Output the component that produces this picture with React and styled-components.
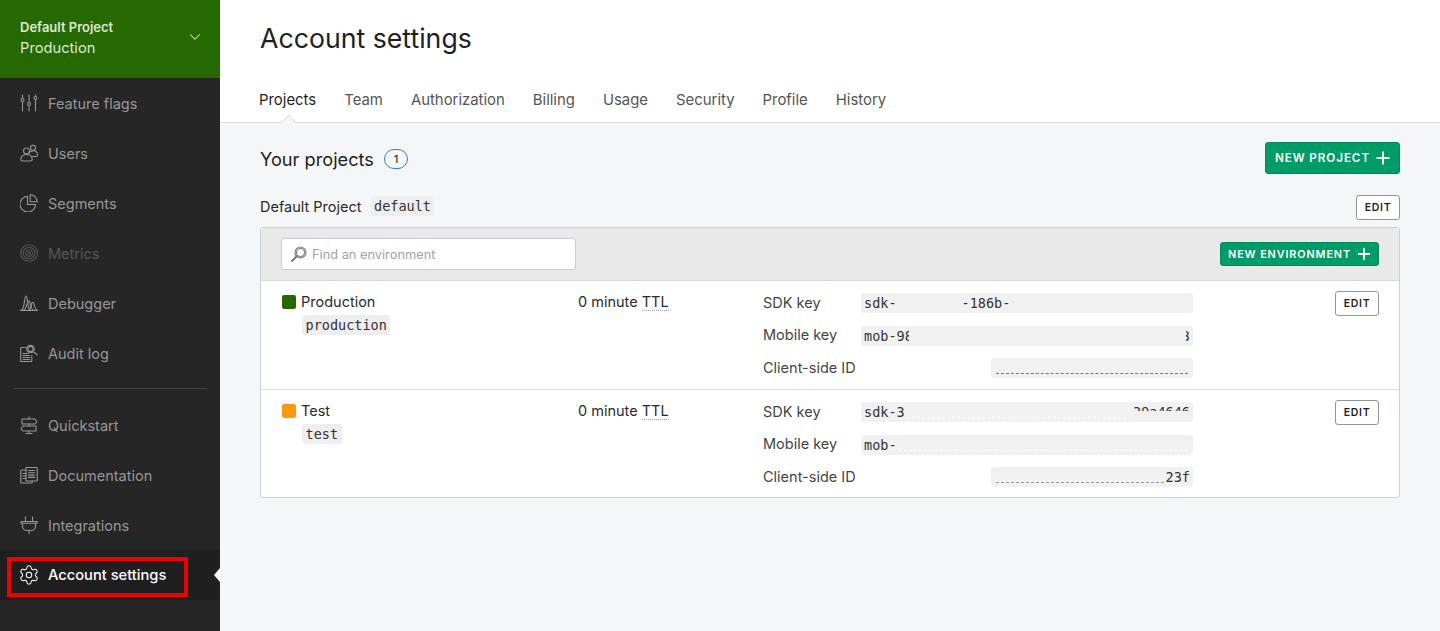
import styled, { createGlobalStyle } from 'styled-components';
import React from 'react';
import { ChevronDown, Plus, Settings } from 'lucide-react';

const MONO = '"DejaVu Sans Mono", "Liberation Mono", monospace';

const GlobalStyle = createGlobalStyle`
  html, body { margin: 0; padding: 0; height: 100%; }
  body {
    font-family: Inter, "Noto Sans", sans-serif;
    color: #2a2a2a;
    overflow: hidden;
  }
  #root { height: 100%; }
`;

const Page = styled.div`
  display: flex;
  width: 1440px;
  height: 631px;
  background: #f5f6f8;
`;

const Sidebar = styled.aside`
  flex: 0 0 220px;
  display: flex;
  flex-direction: column;
  background: #262626;
`;

const Switcher = styled.div`
  height: 78px;
  box-sizing: border-box;
  padding: 18px 16px 0 20px;
  display: flex;
  align-items: flex-start;
  justify-content: space-between;
  background: #266900;
  color: #dbe8d2;
`;

const SwitcherProject = styled.div`
  font-size: 13px;
  line-height: 18px;
  font-weight: 600;
`;

const SwitcherEnv = styled.div`
  font-size: 14.7px;
  line-height: 22px;
  margin-top: 1px;
`;

const SwitcherChevron = styled(ChevronDown)`
  margin-top: 10px;
  color: #dbe8d2;
`;

const NavItem = styled.div`
  position: relative;
  height: 50px;
  padding-left: 20px;
  display: flex;
  align-items: center;
  gap: 10px;
  font-size: ${p => (p.$active ? '14.7px' : '14.5px')};
  color: ${p => (p.$active ? '#ffffff' : p.$dim ? '#565656' : '#979797')};
  background: ${p => (p.$active ? '#1f1f1f' : 'transparent')};
  font-weight: ${p => (p.$active ? 500 : 400)};
`;

const ActiveArrow = styled.span`
  position: absolute;
  right: 0;
  top: 18px;
  border-style: solid;
  border-width: 7px 6px 7px 0;
  border-color: transparent #ffffff transparent transparent;
`;

const Highlight = styled.span`
  position: absolute;
  left: 7px;
  top: 7px;
  width: 181px;
  height: 40px;
  box-sizing: border-box;
  border: 4px solid #f00000;
`;

const NavRule = styled.hr`
  margin: 10px 13px 11px;
  border: 0;
  height: 1px;
  background: #3d3d3d;
`;

const Glyph = styled.svg`
  flex: 0 0 18px;
  width: 18px;
  height: 18px;
  fill: none;
  stroke: currentColor;
  stroke-width: 1.1;
  stroke-linecap: round;
  stroke-linejoin: round;
`;

const SlidersIcon = () => (
  <Glyph viewBox="0 0 18 18">
    <path d="M2.5 1v3.5M2.5 7.5V17M9 1v7.5M9 11.5V17M15.5 1v1.5M15.5 5.5V17" />
    <circle cx="2.5" cy="6" r="1.5" />
    <circle cx="9" cy="10" r="1.5" />
    <circle cx="15.5" cy="4" r="1.5" />
  </Glyph>
);

const UsersIcon = () => (
  <Glyph viewBox="0 0 18 18">
    <circle cx="6.5" cy="7" r="3" />
    <circle cx="13" cy="3.8" r="2.6" />
    <path d="M.8 15.5c0-3 2.300-5 5.700-5s5.700 2 5.700 5c0 .9-.6 1.500-1.500 1.500H2.300c-.9 0-1.500-.6-1.500-1.500z" />
    <path d="M9.500 8.500c.9-1 2.200-1.700 3.700-1.700 2.600 0 4.300 1.700 4.300 4.200 0 .9-.6 1.500-1.300 1.500h-3.500" />
  </Glyph>
);

const SegmentsIcon = () => (
  <Glyph viewBox="0 0 18 18">
    <path d="M7.500 2.400a7.800 7.800 0 1 0 8.100 8.100H7.500z" />
    <path d="M10.200 .8a7 7 0 0 1 7 7h-7z" />
  </Glyph>
);

const MetricsIcon = () => (
  <Glyph viewBox="0 0 18 18">
    <circle cx="9" cy="9" r="8.3" />
    <circle cx="9" cy="9" r="5.8" />
    <circle cx="9" cy="9" r="3.3" />
    <circle cx="9" cy="9" r="1.2" />
  </Glyph>
);

const DebuggerIcon = () => (
  <Glyph viewBox="0 0 18 18">
    <path d="M.8 16c2.500 0 2.700-2.500 3.300-6C4.700 6 5 2 6 2s1.300 4 1.900 8c.6 3.500 1 6 2.600 6" />
    <path d="M3.500 16c2 0 2.600-2.500 3.300-5 .6-2.200 1-4 1.900-4s1.400 1.800 1.900 4c.6 2.500 1.300 5 3 5" />
    <path d="M8.500 16c2 0 2.300-2.500 3-5.500.4-1.500.7-2.500 1.300-2.500s1 1 1.400 2.500c.7 3 1.300 5.500 3 5.500" />
    <path d="M.8 16.500h16.400" />
  </Glyph>
);

const AuditIcon = () => (
  <Glyph viewBox="0 0 18 18">
    <path d="M6 3.500H1.500a.8.8 0 0 0-.8.8v12.500c0 .4.400.8.800.8h9.500a.8.8 0 0 0 .8-.8v-5.300" />
    <circle cx="10.500" cy="5" r="3.800" />
    <circle cx="10.500" cy="5" r="2.600" />
    <path d="M13.300 7.800l4 3" />
    <path d="M3 9.500h5M3 11.500h6.500M3 13.500h6.500M3 15.500h6.500" />
  </Glyph>
);

const QuickstartIcon = () => (
  <Glyph viewBox="0 0 18 18">
    <path d="M9 1v2M9 8v2M9 15v2.500M6 17.500h6" />
    <path d="M2 3h13l2 2.500L15 8H2z" />
    <path d="M16 10H3l-2 2.500L3 15h13z" />
  </Glyph>
);

const DocsIcon = () => (
  <Glyph viewBox="0 0 18 18">
    <path d="M6 4H1.500a.7.7 0 0 0-.7.7v11.600c0 .4.300.7.700.7h10a.7.7 0 0 0 .7-.7V15" />
    <path d="M6 1.500h10.500c.4 0 .7.300.7.700v12.100c0 .4-.3.700-.7.700H6z" />
    <path d="M8.500 4.500h6M8.500 6.800h6M8.500 9.100h6M8.500 11.400h6M3 7.500h3M3 10h3M3 12.500h3" />
  </Glyph>
);

const PlugIcon = () => (
  <Glyph viewBox="0 0 18 18">
    <path d="M5.500 .8v4.700M12.500 .8v4.700" />
    <path d="M1 5.500h16v1.800H1z" />
    <path d="M2.500 7.300v3c0 2.600 2.200 4.200 4.500 4.200h4c2.300 0 4.500-1.600 4.500-4.200v-3" />
    <path d="M9 14.500v3" />
  </Glyph>
);

const GearIcon = styled(Settings)`
  flex: 0 0 22px;
  margin: 0 -2px;
`;

const NAV_TOP = [
  { label: 'Feature flags', icon: <SlidersIcon /> },
  { label: 'Users', icon: <UsersIcon /> },
  { label: 'Segments', icon: <SegmentsIcon /> },
  { label: 'Metrics', icon: <MetricsIcon />, dim: true },
  { label: 'Debugger', icon: <DebuggerIcon /> },
  { label: 'Audit log', icon: <AuditIcon /> },
];

const NAV_BOTTOM = [
  { label: 'Quickstart', icon: <QuickstartIcon /> },
  { label: 'Documentation', icon: <DocsIcon /> },
  { label: 'Integrations', icon: <PlugIcon /> },
];

const Main = styled.main`
  flex: 1;
  min-width: 0;
`;

const Header = styled.header`
  height: 123px;
  box-sizing: border-box;
  padding: 20px 40px 0;
  background: #ffffff;
  border-bottom: 1px solid #dcdde0;
`;

const Title = styled.h1`
  margin: 0;
  font-size: 26.7px;
  line-height: 36px;
  font-weight: 400;
  color: #1f1f1f;
`;

const Tabs = styled.nav`
  display: flex;
  gap: 28px;
  margin: 33px 0 0 -1px;
`;

const Tab = styled.span`
  position: relative;
  font-size: 14.9px;
  line-height: 22px;
  color: ${p => (p.$active ? '#1f1f1f' : '#555555')};

  ${p => p.$active && `
    &::after {
      content: '';
      position: absolute;
      left: 50%;
      bottom: -17px;
      width: 10px;
      height: 10px;
      margin-left: -5px;
      background: #f5f6f8;
      border-left: 1px solid #dcdde0;
      border-top: 1px solid #dcdde0;
      transform: rotate(45deg);
    }
  `}
`;

const Content = styled.div`
  padding: 19px 40px 0;
`;

const SectionHead = styled.div`
  display: flex;
  align-items: center;
  justify-content: space-between;
  height: 32px;
`;

const SectionTitle = styled.h2`
  display: flex;
  align-items: center;
  gap: 10px;
  margin: 1px 0 0;
  font-size: 18.2px;
  font-weight: 400;
  color: #1f1f1f;
`;

const CountBadge = styled.span`
  display: inline-flex;
  align-items: center;
  justify-content: center;
  width: 24px;
  height: 20px;
  box-sizing: border-box;
  border: 1px solid #2f7fe6;
  border-radius: 10px;
  font-size: 11px;
  font-weight: 500;
  color: #333333;
`;

const PrimaryButton = styled.button`
  display: inline-flex;
  align-items: center;
  gap: ${p => (p.$small ? '4px' : '3px')};
  box-sizing: border-box;
  height: ${p => (p.$small ? '24px' : '32px')};
  padding: ${p => (p.$small ? '0 5px 0 7px' : '0 6px 0 9px')};
  border: 1px solid #008a5b;
  border-radius: 3px;
  background: #009c68;
  color: #ffffff;
  font-family: inherit;
  font-size: ${p => (p.$small ? '10.8px' : '11.7px')};
  font-weight: 600;
  letter-spacing: 0.9px;
`;

const EditButton = styled.button`
  width: 44px;
  height: 25px;
  box-sizing: border-box;
  padding: 0;
  border: 1px solid #8f959e;
  border-radius: 3px;
  background: #ffffff;
  color: #1f1f1f;
  font-family: inherit;
  font-size: 10.5px;
  font-weight: 600;
  letter-spacing: 0.7px;
`;

const ProjectHead = styled.div`
  display: flex;
  align-items: flex-start;
  justify-content: space-between;
  margin-top: 21px;
  height: 25px;
`;

const ProjectName = styled.div`
  display: flex;
  align-items: center;
  gap: 9px;
  margin-top: 1px;
  font-size: 14.5px;
  color: #2a2a2a;
`;

const Code = styled.code`
  display: inline-block;
  padding: 0 3.5px;
  height: 20px;
  line-height: 20px;
  border-radius: 3px;
  background: #eeeeee;
  font-family: ${MONO};
  font-size: 13.5px;
  color: #333333;
`;

const Card = styled.section`
  margin-top: 7px;
  border: 1px solid #ccd1d9;
  border-radius: 3px;
  background: #ffffff;
`;

const Toolbar = styled.div`
  display: flex;
  align-items: center;
  justify-content: space-between;
  height: 52px;
  padding: 0 20px;
  background: #e9e9e9;
  border-bottom: 1px solid #d5d8dc;
`;

const SearchBox = styled.div`
  display: flex;
  align-items: center;
  gap: 5px;
  width: 295px;
  height: 32px;
  box-sizing: border-box;
  padding: 0 8px;
  border: 1px solid #c9ccd1;
  border-radius: 3px;
  background: #ffffff;
  font-size: 12.8px;
  color: #a3a3a3;
`;

const SearchGlyph = styled(Glyph)`
  flex: 0 0 17px;
  width: 17px;
  height: 17px;
  color: #777777;
`;

const EnvRow = styled.div`
  display: grid;
  grid-template-columns: 296px 185px 431px 1fr;
  height: 108px;
  box-sizing: border-box;
  padding: 10px 20px 0 21px;
  border-top: ${p => (p.$first ? '0' : '1px solid #dcdfe4')};
`;

const EnvName = styled.div`
  display: flex;
  align-items: center;
  gap: 5px;
  height: 21px;
  font-size: 14.5px;
`;

const EnvSwatch = styled.span`
  width: 14px;
  height: 14px;
  border-radius: 2px;
  background: ${p => p.$color};
`;

const EnvKeyChip = styled(Code)`
  margin: 3px 0 0 20px;
`;

const TtlText = styled.div`
  font-size: 14.5px;
  line-height: 21px;
  white-space: pre;
`;

const Abbr = styled.span`
  border-bottom: 1px dotted #9a9a9a;
`;

const KeyList = styled.div`
  display: flex;
  flex-direction: column;
  gap: 12.5px;
  margin-top: 2px;
`;

const KeyRow = styled.div`
  display: flex;
  align-items: center;
  justify-content: space-between;
  height: 20px;
  width: 430px;
  font-size: 14.5px;
  color: #444444;
`;

const KeyLabel = styled.span`
  margin-top: -2px;
`;

const KeyField = styled.div`
  display: flex;
  align-items: center;
  justify-content: ${p => (p.$short ? 'flex-end' : 'flex-start')};
  box-sizing: border-box;
  width: ${p => (p.$short ? '202px' : '332px')};
  height: 20px;
  padding: 0 3px;
  border-radius: 3px;
  background: #f1f1f1;
  font-family: ${MONO};
  font-size: 13.5px;
  color: #333333;
`;

const KeyGap = styled.span`
  flex: ${p => (p.$w ? `0 0 ${p.$w}px` : 1)};
`;

// the keys are painted over in the screenshot, a patch in the field colour leaves half a glyph
const KeyMasked = styled.span`
  position: relative;

  &::after {
    content: '';
    position: absolute;
    background: #f1f1f1;
    top: ${p => (p.$side === 'bottom' ? '7px' : '0')};
    bottom: 0;
    left: ${p => (p.$side === 'left' ? '0' : p.$side === 'bottom' ? '0' : 'auto')};
    right: ${p => (p.$side === 'left' ? 'auto' : '0')};
    width: ${p => (p.$side === 'bottom' ? 'auto' : '4px')};
  }
`;

// what is left of the painted out keys, a faint dashed line
const KeyResidue = styled.span`
  flex: 1;
  align-self: flex-end;
  height: 5px;
  margin: 0 2px 4px;
  border-bottom: 1px dashed ${p => p.$color || '#ffffff'};
`;

const EditCell = styled.div`
  display: flex;
  justify-content: flex-end;
`;

const ENVIRONMENTS = [
  {
    name: 'Production',
    chip: 'production',
    color: '#266900',
    keys: [
      { label: 'SDK key', parts: [['t', 'sdk-'], ['g', 65], ['t', '-186b-']] },
      { label: 'Mobile key', parts: [['m', 'mob-98', 'right'], ['g'], ['m', '3', 'left']] },
      { label: 'Client-side ID', short: true, parts: [['r', '#777777']] },
    ],
  },
  {
    name: 'Test',
    chip: 'test',
    color: '#ff9810',
    keys: [
      { label: 'SDK key', parts: [['t', 'sdk-3'], ['r'], ['m', '39a4646', 'bottom']] },
      { label: 'Mobile key', parts: [['t', 'mob-'], ['r']] },
      { label: 'Client-side ID', short: true, parts: [['r', '#999999'], ['t', '23f']] },
    ],
  },
];

const renderPart = ([kind, value, side], i) => {
  if (kind === 't') return <span key={i}>{value}</span>;
  if (kind === 'm') return <KeyMasked key={i} $side={side}>{value}</KeyMasked>;
  if (kind === 'g') return <KeyGap key={i} $w={value} />;
  return <KeyResidue key={i} $color={value} />;
};

export default function App() {
  return (
    <Page>
      <GlobalStyle />
      <Sidebar>
        <Switcher>
          <div>
            <SwitcherProject>Default Project</SwitcherProject>
            <SwitcherEnv>Production</SwitcherEnv>
          </div>
          <SwitcherChevron size={18} strokeWidth={1.4} />
        </Switcher>
        {NAV_TOP.map(item => (
          <NavItem key={item.label} $dim={item.dim}>
            {item.icon}
            {item.label}
          </NavItem>
        ))}
        <NavRule />
        {NAV_BOTTOM.map(item => (
          <NavItem key={item.label}>
            {item.icon}
            {item.label}
          </NavItem>
        ))}
        <NavItem $active>
          <GearIcon size={22} strokeWidth={1.1} />
          Account settings
          <Highlight />
          <ActiveArrow />
        </NavItem>
      </Sidebar>
      <Main>
        <Header>
          <Title>Account settings</Title>
          <Tabs>
            <Tab $active>Projects</Tab>
            <Tab>Team</Tab>
            <Tab>Authorization</Tab>
            <Tab>Billing</Tab>
            <Tab>Usage</Tab>
            <Tab>Security</Tab>
            <Tab>Profile</Tab>
            <Tab>History</Tab>
          </Tabs>
        </Header>
        <Content>
          <SectionHead>
            <SectionTitle>
              Your projects
              <CountBadge>1</CountBadge>
            </SectionTitle>
            <PrimaryButton>
              NEW PROJECT
              <Plus size={20} strokeWidth={2.2} />
            </PrimaryButton>
          </SectionHead>
          <ProjectHead>
            <ProjectName>
              Default Project
              <Code>default</Code>
            </ProjectName>
            <EditButton>EDIT</EditButton>
          </ProjectHead>
          <Card>
            <Toolbar>
              <SearchBox>
                <SearchGlyph viewBox="0 0 17 17">
                  <circle cx="10.5" cy="6.5" r="5.5" />
                  <circle cx="10.5" cy="6.5" r="4" />
                  <path d="M6.5 10.5L2 15" strokeWidth="2" />
                </SearchGlyph>
                Find an environment
              </SearchBox>
              <PrimaryButton $small>
                NEW ENVIRONMENT
                <Plus size={18} strokeWidth={2.4} />
              </PrimaryButton>
            </Toolbar>
            {ENVIRONMENTS.map((env, i) => (
              <EnvRow key={env.name} $first={i === 0}>
                <div>
                  <EnvName>
                    <EnvSwatch $color={env.color} />
                    {env.name}
                  </EnvName>
                  <EnvKeyChip>{env.chip}</EnvKeyChip>
                </div>
                <TtlText>
                  0 minute <Abbr>TTL</Abbr>
                </TtlText>
                <KeyList>
                  {env.keys.map(k => (
                    <KeyRow key={k.label}>
                      <KeyLabel>{k.label}</KeyLabel>
                      <KeyField $short={k.short}>{k.parts.map(renderPart)}</KeyField>
                    </KeyRow>
                  ))}
                </KeyList>
                <EditCell>
                  <EditButton>EDIT</EditButton>
                </EditCell>
              </EnvRow>
            ))}
          </Card>
        </Content>
      </Main>
    </Page>
  );
}
